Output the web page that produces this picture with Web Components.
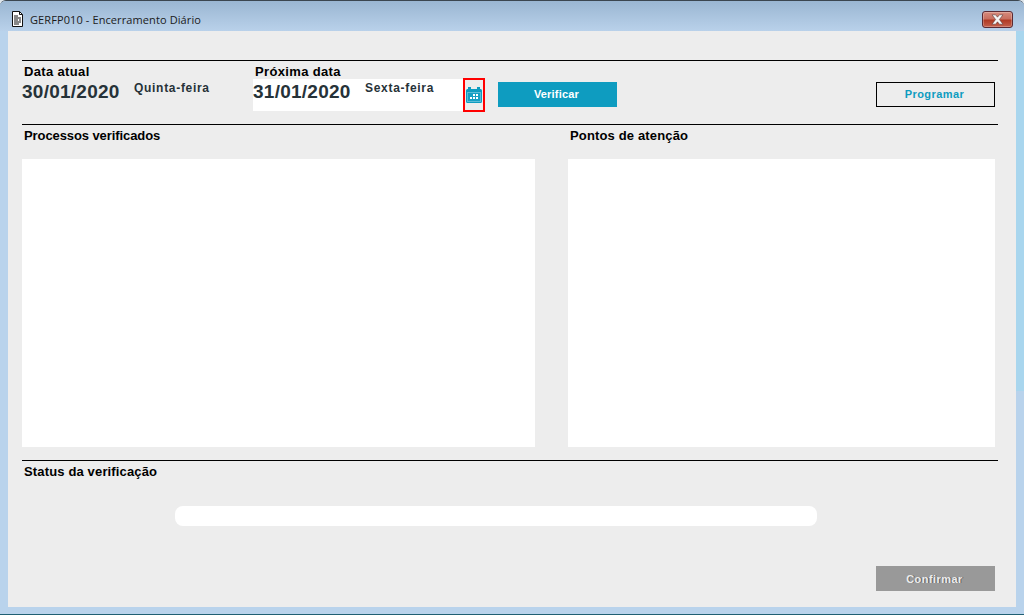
<!DOCTYPE html>
<html lang="pt-BR">
<head>
<meta charset="utf-8">
<title>GERFP010 - Encerramento Diário</title>
<style>
    html, body { margin: 0; padding: 0; background: #dfe6ec; }
    body { width: 1024px; height: 615px; overflow: hidden; font-family: "Liberation Sans", Arial, sans-serif; }
</style>
</head>
<body>

<app-window caption="GERFP010 - Encerramento Diário">
    <form-section class="top">
        <top-row>
            <date-field label="Data atual" date="30/01/2020" weekday="Quinta-feira"></date-field>
            <date-field label="Próxima data" date="31/01/2020" weekday="Sexta-feira" editable></date-field>
            <action-button kind="primary">Verificar</action-button>
            <action-button kind="outline">Programar</action-button>
        </top-row>
    </form-section>
    <form-section class="lists">
        <list-columns>
            <list-panel heading="Processos verificados" tracking="-.09px"></list-panel>
            <list-panel heading="Pontos de atenção" tracking=".15px"></list-panel>
        </list-columns>
    </form-section>
    <form-section class="status">
        <status-area heading="Status da verificação">
            <action-button kind="disabled">Confirmar</action-button>
        </status-area>
    </form-section>
</app-window>

<script>
class AppWindow extends HTMLElement {
    constructor(){
        super();
        this.attachShadow({mode:'open'});
        this.shadowRoot.innerHTML = /* html */ `
            <style>
                :host {
                    display: flex;
                    flex-direction: column;
                    box-sizing: border-box;
                    width: 1024px;
                    height: 615px;
                    background: #b9d3ec;
                    border-top: 1px solid #3b4650;
                    border-bottom: 1px solid #1f5f73;
                    border-radius: 6px 6px 0 0;
                    overflow: hidden;
                }
                .titlebar {
                    display: flex;
                    align-items: center;
                    box-sizing: border-box;
                    height: 30px;
                    flex: none;
                    padding: 6px 11px 0 12px;
                    background: linear-gradient(#9ab6d2, #b9d1ea);
                    font: 11px "Open Sans", "Liberation Sans", sans-serif;
                    letter-spacing: .1px;
                    color: #1b1b1b;
                }
                .titlebar svg.doc { margin-right: 7px; flex: none; }
                .titlebar span { flex: 1; }
                .close {
                    width: 31px;
                    height: 17px;
                    box-sizing: border-box;
                    border: 1px solid #5b2a33;
                    border-radius: 3px;
                    background: linear-gradient(#d68a7c 0, #c86f60 45%, #b03a24 55%, #c4604c 100%);
                    box-shadow: inset 0 0 0 1px rgba(255,255,255,.25);
                    display: flex;
                    align-items: center;
                    justify-content: center;
                }
                .frame {
                    flex: 1;
                    display: flex;
                    padding: 0 8px 7px 8px;
                    background: linear-gradient(90deg, #b9d3ec 8px, transparent 8px), linear-gradient(#a9d6ee 360px, #b9d3ec 360px);
                }
                .client {
                    flex: 1;
                    box-sizing: border-box;
                    background: #ededed;
                    padding: 29px 18px 0 14px;
                    color: #000;
                }
            </style>
            <div class="titlebar">
                <svg class="doc" width="11" height="16" viewBox="0 0 11 16">
                    <path d="M.5 .5H7.5L10.5 3.5V15.5H.5Z" fill="#fff" stroke="#111"/>
                    <path d="M7.5 .5V3.5H10.5" fill="none" stroke="#111"/>
                    <path d="M2 5H6M2 7H9M2 9H6M7 9H9M2 11H9M2 13H7" stroke="#111" fill="none"/>
                </svg>
                <span>${this.getAttribute('caption')}</span>
                <div class="close">
                    <svg width="17" height="11" viewBox="0 0 17 11">
                        <path d="M3 .8H6.6L8.5 3.2L10.4 .8H14L10.4 5.5L14 10.2H10.4L8.5 7.8L6.6 10.2H3L6.6 5.5Z" fill="#f6f6f6" stroke="#5a3a3a" stroke-width=".6"/>
                    </svg>
                </div>
            </div>
            <div class="frame"><div class="client"><slot></slot></div></div>
        `;
    }
}

class FormSection extends HTMLElement {
    constructor(){
        super();
        this.attachShadow({mode:'open'});
        this.shadowRoot.innerHTML = /* html */ `
            <style>
                :host {
                    display: block;
                    box-sizing: border-box;
                    border-top: 1px solid #000;
                }
                :host(.top) { height: 64px; }
                :host(.lists) { height: 336px; }
                :host(.status) { height: 146px; }
            </style>
            <slot></slot>
        `;
    }
}

class TopRow extends HTMLElement {
    constructor(){
        super();
        this.attachShadow({mode:'open'});
        this.shadowRoot.innerHTML = /* html */ `
            <style>
                :host {
                    display: grid;
                    grid-template-columns: 231px 245px 119px 1fr;
                    align-items: start;
                    padding: 3px 3px 0 0;
                }
                ::slotted(action-button) { margin-top: 18px; }
                ::slotted(action-button:last-child) { justify-self: end; }
            </style>
            <slot></slot>
        `;
    }
}

class DateField extends HTMLElement {
    constructor(){
        super();
        this.attachShadow({mode:'open'});
        const editable = this.hasAttribute('editable');
        this.shadowRoot.innerHTML = /* html */ `
            <style>
                :host { display: block; }
                .label {
                    height: 15px;
                    line-height: 15px;
                    padding-left: 2px;
                    font-size: 13px;
                    font-weight: bold;
                    letter-spacing: .35px;
                    color: #000;
                }
                .row { display: flex; align-items: flex-start; height: 32px; }
                .value {
                    display: flex;
                    width: ${ editable ? '210px' : 'auto' };
                    height: 32px;
                    background: ${ editable ? '#fff' : 'transparent' };
                }
                .date {
                    width: 112px;
                    padding-top: 2px;
                    font-size: 19px;
                    line-height: 22px;
                    font-weight: bold;
                    letter-spacing: .25px;
                    color: #263238;
                }
                .weekday {
                    line-height: 19px;
                    font-size: 12px;
                    font-weight: bold;
                    letter-spacing: .7px;
                    color: #263238;
                }
                .pick {
                    box-sizing: border-box;
                    width: 22px;
                    height: 34px;
                    margin-top: -1px;
                    border: 2px solid #f00;
                    display: flex;
                    align-items: center;
                    justify-content: center;
                }
            </style>
            <div class="label">${this.getAttribute('label')}</div>
            <div class="row">
                <div class="value">
                    <div class="date">${this.getAttribute('date')}</div>
                    <div class="weekday">${this.getAttribute('weekday')}</div>
                </div>
                ${ editable ? `
                <div class="pick">
                    <svg width="16" height="16" viewBox="0 0 16 16">
                        <rect x="2" y="0" width="3" height="4" fill="#0e9cc0"/>
                        <rect x="11" y="0" width="3" height="4" fill="#0e9cc0"/>
                        <path d="M1.5 2H14.5A1.5 1.5 0 0 1 16 3.5V14.5A1.5 1.5 0 0 1 14.5 16H1.5A1.5 1.5 0 0 1 0 14.5V3.5A1.5 1.5 0 0 1 1.5 2Z" fill="#0e9cc0"/>
                        <rect x="1.5" y="5.5" width="13" height="9" fill="#16a0c4" stroke="#5cbcd6"/>
                        <path d="M7 7H9V9H7ZM10 7H12V9H10ZM4 10H6V12H4ZM7 10H9V12H7ZM10 10H12V12H10Z" fill="#fff"/>
                    </svg>
                </div>` : '' }
            </div>
        `;
    }
}

class ActionButton extends HTMLElement {
    constructor(){
        super();
        this.attachShadow({mode:'open'});
        const kind = this.getAttribute('kind');
        this.shadowRoot.innerHTML = /* html */ `
            <style>
                :host {
                    display: block;
                    width: 119px;
                    height: 25px;
                }
                button {
                    display: block;
                    box-sizing: border-box;
                    width: 100%;
                    height: 100%;
                    padding: ${ kind === 'disabled' ? '0 2px 0 0' : '0 2px 2px 0' };
                    border: ${ kind === 'outline' ? '1px solid #000' : '0' };
                    border-radius: 0;
                    background: ${ kind === 'primary' ? '#0e9cc0' : kind === 'disabled' ? '#999' : 'transparent' };
                    color: ${ kind === 'outline' ? '#0e9cc0' : kind === 'disabled' ? '#ececec' : '#fff' };
                    font: bold 11px "Liberation Sans", Arial, sans-serif;
                    letter-spacing: ${ kind === 'primary' ? '.2px' : '.45px' };
                    ${ kind === 'disabled' ? 'text-shadow: 1px 0 0 #5f5f5f;' : '' }
                }
            </style>
            <button type="button"><slot></slot></button>
        `;
    }
}

class ListColumns extends HTMLElement {
    constructor(){
        super();
        this.attachShadow({mode:'open'});
        this.shadowRoot.innerHTML = /* html */ `
            <style>
                :host {
                    display: grid;
                    grid-template-columns: 513px 427px;
                    column-gap: 33px;
                }
            </style>
            <slot></slot>
        `;
    }
}

class ListPanel extends HTMLElement {
    constructor(){
        super();
        this.attachShadow({mode:'open'});
        this.shadowRoot.innerHTML = /* html */ `
            <style>
                :host { display: block; }
                h2 {
                    margin: 0;
                    height: 34px;
                    padding: 3px 0 0 2px;
                    box-sizing: border-box;
                    font-size: 13px;
                    line-height: 15px;
                    letter-spacing: ${ this.getAttribute('tracking') || 0 };
                    font-weight: bold;
                }
                .box { height: 288px; background: #fff; }
            </style>
            <h2>${this.getAttribute('heading')}</h2>
            <div class="box"><slot></slot></div>
        `;
    }
}

class StatusArea extends HTMLElement {
    constructor(){
        super();
        this.attachShadow({mode:'open'});
        this.shadowRoot.innerHTML = /* html */ `
            <style>
                :host {
                    display: flex;
                    flex-direction: column;
                    padding-right: 3px;
                }
                h2 {
                    margin: 0;
                    height: 45px;
                    padding: 3px 0 0 2px;
                    box-sizing: border-box;
                    font-size: 13px;
                    line-height: 15px;
                    letter-spacing: .15px;
                    font-weight: bold;
                }
                .bar {
                    width: 642px;
                    height: 20px;
                    margin-left: 153px;
                    margin-bottom: 40px;
                    border-radius: 8px;
                    background: #fff;
                }
                ::slotted(action-button) { align-self: flex-end; }
            </style>
            <h2>${this.getAttribute('heading')}</h2>
            <div class="bar"></div>
            <slot></slot>
        `;
    }
}

customElements.define('app-window', AppWindow);
customElements.define('form-section', FormSection);
customElements.define('top-row', TopRow);
customElements.define('date-field', DateField);
customElements.define('action-button', ActionButton);
customElements.define('list-columns', ListColumns);
customElements.define('list-panel', ListPanel);
customElements.define('status-area', StatusArea);
</script>
</body>
</html>
